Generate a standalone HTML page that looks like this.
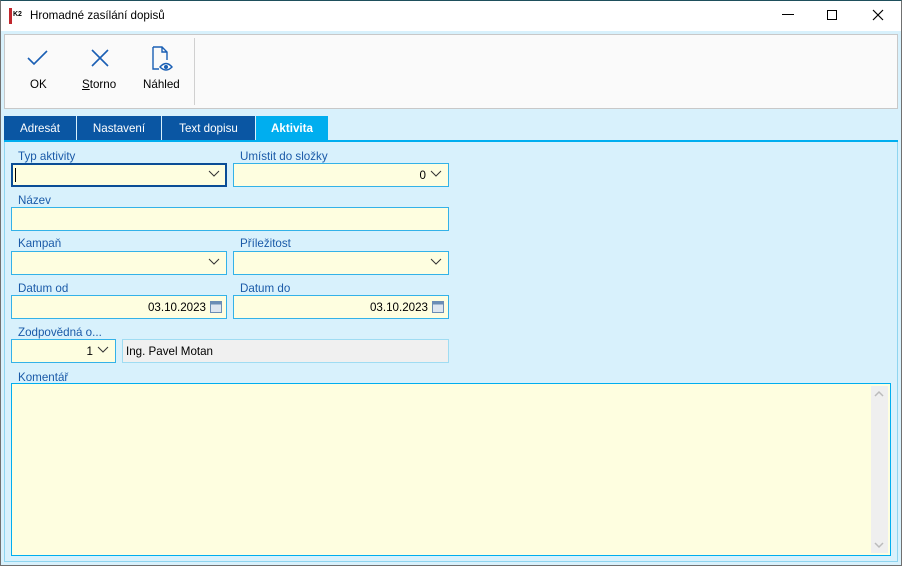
<!DOCTYPE html>
<html><head><meta charset="utf-8"><style>
*{box-sizing:border-box;margin:0;padding:0}
body{width:902px;height:566px;position:relative;background:#d8f1fc;font-family:"Segoe UI","Liberation Sans",sans-serif;font-size:11.6px;overflow:hidden}
.a{position:absolute}
.title{left:0;top:0;width:902px;height:31px;background:#fff}
.lbl{position:absolute;color:#1a5aa8;margin-top:2px}
.f{position:absolute;background:#fefee0;border:1px solid #33b2e8;height:24px}
.chev{position:absolute;right:6px;top:6px}
.val{position:absolute;right:22px;top:5px;color:#000}
.tab{position:absolute;top:116px;height:25px;background:#0a56a3;color:#fff;text-align:center;line-height:26px}
</style></head><body>
<div class="a title"></div>
<div class="a" style="left:9px;top:8px;width:16px;height:16px;background:#fff;border-left:3px solid #c0272d"><span style="font-size:7px;font-weight:bold;position:absolute;left:1px;top:3px">K2</span></div>
<div class="a" style="left:30px;top:9px">Hromadné zasílání dopisů</div>
<div class="a" style="left:782px;top:14px;width:12px;height:1px;background:#000"></div>
<div class="a" style="left:827px;top:10px;width:10px;height:10px;border:1px solid #000"></div>
<svg class="a" style="left:872px;top:9px" width="12" height="12"><path d="M1 1L11 11M11 1L1 11" stroke="#000" stroke-width="1.2"/></svg>
<div class="a" style="left:4px;top:34px;width:894px;height:75px;background:#fafafa;border:1px solid #c8c8c8"></div>
<div class="a" style="left:194px;top:38px;width:1px;height:67px;background:#d0d0d0"></div>
<svg class="a" style="left:27px;top:49px" width="22" height="18"><path d="M1 9L7 15L20 2" fill="none" stroke="#1a5fb4" stroke-width="1.6"/></svg>
<svg class="a" style="left:90px;top:48px" width="20" height="20"><path d="M2 2L18 18M18 2L2 18" stroke="#1a5fb4" stroke-width="1.6"/></svg>
<svg class="a" style="left:150px;top:45px" width="26" height="28"><path d="M3 2H12L17 7V15M3 2V24H9M12 2V7H17" fill="none" stroke="#1a5fb4" stroke-width="1.4"/><path d="M10 22Q16 15 22 22Q16 28 10 22Z" fill="none" stroke="#1a5fb4" stroke-width="1.4"/><circle cx="16" cy="22" r="2" fill="#1a5fb4"/></svg>
<div class="a" style="left:30px;top:78px">OK</div>
<div class="a" style="left:82px;top:78px"><u>S</u>torno</div>
<div class="a" style="left:143px;top:78px">Náhled</div>
<div class="tab" style="left:4px;width:72px">Adresát</div>
<div class="tab" style="left:77px;width:84px">Nastavení</div>
<div class="tab" style="left:162px;width:93px">Text dopisu</div>
<div class="tab" style="left:256px;width:72px;background:#00aeef;font-weight:bold">Aktivita</div>
<div class="a" style="left:4px;top:140px;width:894px;height:2px;background:#00aeef"></div>
<div class="a" style="left:4px;top:142px;width:894px;height:420px;border:1px solid #8ed5f0;border-top:none"></div>

<div class="lbl" style="left:18px;top:148px">Typ aktivity</div>
<div class="lbl" style="left:240px;top:148px">Umístit do složky</div>
<div class="f" style="left:11px;top:163px;width:216px;border:2px solid #0a4d96"><div class="a" style="left:2px;top:3px;width:1px;height:14px;background:#000"></div><svg class="chev" style="top:5px;right:5px" width="12" height="8"><path d="M1 1L6 6L11 1" fill="none" stroke="#333"/></svg></div>
<div class="f" style="left:233px;top:163px;width:216px"><span class="val">0</span><svg class="chev" width="12" height="8"><path d="M1 1L6 6L11 1" fill="none" stroke="#333"/></svg></div>
<div class="lbl" style="left:18px;top:192px">Název</div>
<div class="f" style="left:11px;top:207px;width:438px"></div>
<div class="lbl" style="left:18px;top:235px">Kampaň</div>
<div class="lbl" style="left:240px;top:235px">Příležitost</div>
<div class="f" style="left:11px;top:251px;width:216px"><svg class="chev" width="12" height="8"><path d="M1 1L6 6L11 1" fill="none" stroke="#333"/></svg></div>
<div class="f" style="left:233px;top:251px;width:216px"><svg class="chev" width="12" height="8"><path d="M1 1L6 6L11 1" fill="none" stroke="#333"/></svg></div>
<div class="lbl" style="left:18px;top:280px">Datum od</div>
<div class="lbl" style="left:240px;top:280px">Datum do</div>
<div class="f" style="left:11px;top:295px;width:216px"><span class="val" style="right:20px">03.10.2023</span><svg class="a" style="right:4px;top:5px" width="12" height="12"><rect x="0.5" y="0.5" width="11" height="11" fill="#dde6f0" stroke="#6b8db5"/><rect x="0.5" y="0.5" width="11" height="3" fill="#6b8db5"/></svg></div>
<div class="f" style="left:233px;top:295px;width:216px"><span class="val" style="right:20px">03.10.2023</span><svg class="a" style="right:4px;top:5px" width="12" height="12"><rect x="0.5" y="0.5" width="11" height="11" fill="#dde6f0" stroke="#6b8db5"/><rect x="0.5" y="0.5" width="11" height="3" fill="#6b8db5"/></svg></div>
<div class="lbl" style="left:18px;top:324px">Zodpovědná o...</div>
<div class="f" style="left:11px;top:339px;width:105px"><span class="val">1</span><svg class="chev" width="12" height="8"><path d="M1 1L6 6L11 1" fill="none" stroke="#333"/></svg></div>
<div class="f" style="left:122px;top:339px;width:327px;background:#f0f0f0;border-color:#9fdcf2"><span class="a" style="left:3px;top:5px">Ing. Pavel Motan</span></div>
<div class="lbl" style="left:18px;top:369px">Komentář</div>
<div class="f" style="left:11px;top:383px;width:880px;height:173px;border:1px solid #00aeef"><div class="a" style="right:2px;top:2px;width:17px;height:167px;background:#efefef"></div>
<svg class="a" style="right:6px;top:6px" width="10" height="7"><path d="M1 6L5 2L9 6" fill="none" stroke="#bbb" stroke-width="1.5"/></svg>
<svg class="a" style="right:6px;bottom:6px" width="10" height="7"><path d="M1 1L5 5L9 1" fill="none" stroke="#bbb" stroke-width="1.5"/></svg></div>
<div class="a" style="left:0;top:0;width:902px;height:566px;border:1px solid #707070;border-top-color:#1e4f5c;pointer-events:none"></div>
</body></html>
